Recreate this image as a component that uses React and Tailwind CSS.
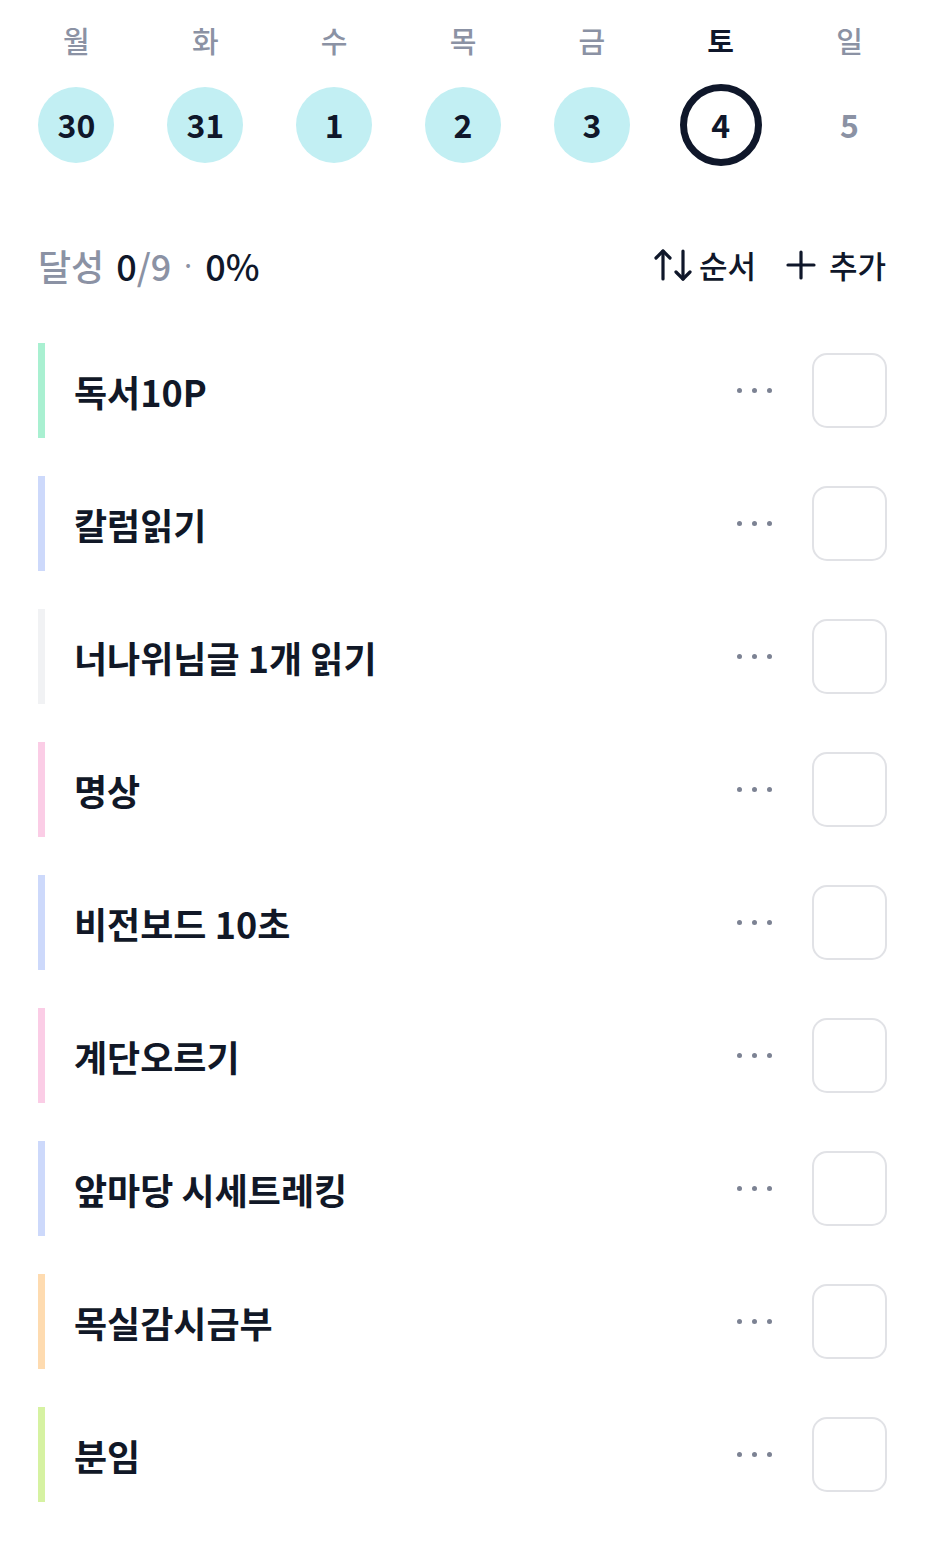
import React from "react";

const days = [
  { w: "월", d: "30", state: "done" },
  { w: "화", d: "31", state: "done" },
  { w: "수", d: "1", state: "done" },
  { w: "목", d: "2", state: "done" },
  { w: "금", d: "3", state: "done" },
  { w: "토", d: "4", state: "today" },
  { w: "일", d: "5", state: "future" },
];

const tasks = [
  { t: "독서10P", c: "bg-[#a9f0d1]" },
  { t: "칼럼읽기", c: "bg-[#cdd9fb]" },
  { t: "너나위님글 1개 읽기", c: "bg-[#f1f2f4]" },
  { t: "명상", c: "bg-[#fbcde6]" },
  { t: "비전보드 10초", c: "bg-[#cdd9fb]" },
  { t: "계단오르기", c: "bg-[#fbcde6]" },
  { t: "앞마당 시세트레킹", c: "bg-[#cdd9fb]" },
  { t: "목실감시금부", c: "bg-[#fedbb0]" },
  { t: "분임", c: "bg-[#d6f2a2]" },
];

function SortIcon() {
  return (
    <svg width="38" height="34" viewBox="0 0 38 34" fill="none" stroke="#0f172a" strokeWidth="3.2" strokeLinecap="round" strokeLinejoin="round">
      <path d="M9 31V3" />
      <path d="M2 10L9 3L16 10" />
      <path d="M29 3V31" />
      <path d="M22 24L29 31L36 24" />
    </svg>
  );
}

function PlusIcon() {
  return (
    <svg width="30" height="30" viewBox="0 0 30 30" fill="none" stroke="#0f172a" strokeWidth="3.2" strokeLinecap="round">
      <path d="M15 2V28" />
      <path d="M2 15H28" />
    </svg>
  );
}

export default function App() {
  return (
    <div
      className="w-[926px] min-h-[1551px] bg-white text-[#0f172a]"
      style={{ fontFamily: '"Noto Sans CJK KR", "Noto Sans", sans-serif' }}
    >
      <div className="grid grid-cols-7 px-[12px] pt-[20px]">
        {days.map((x) => (
          <div key={x.w} className="flex flex-col items-center">
            <div
              className={`h-[40px] leading-[40px] text-[29px] ${
                x.state === "today" ? "font-bold text-[#0f172a]" : "font-medium text-[#8b92a4]"
              }`}
            >
              {x.w}
            </div>
            <div className="mt-[24px] h-[82px] flex items-center justify-center">
              {x.state === "done" && (
                <div className="w-[76px] h-[76px] rounded-full bg-[#c2eff3] flex items-center justify-center text-[32px] leading-none pb-[3px] font-semibold text-[#0f172a]">
                  {x.d}
                </div>
              )}
              {x.state === "today" && (
                <div className="w-[82px] h-[82px] rounded-full border-[7px] border-[#0f172a] flex items-center justify-center text-[32px] leading-none pb-[3px] font-semibold text-[#0f172a]">
                  {x.d}
                </div>
              )}
              {x.state === "future" && (
                <div className="w-[76px] h-[76px] flex items-center justify-center text-[32px] leading-none pb-[3px] font-semibold text-[#8b92a4]">
                  {x.d}
                </div>
              )}
            </div>
          </div>
        ))}
      </div>

      <div className="mt-[74px] h-[50px] flex items-center justify-between pl-[38px] pr-[40px]">
        <div className="text-[36px] font-medium leading-none flex items-center">
          <span className="text-[#8b92a4]">달성</span>
          <span className="ml-[12px] text-[#0f172a]">0</span>
          <span className="text-[#8b92a4]">/9</span>
          <span className="mx-[10px] text-[#8b92a4] text-[24px]">·</span>
          <span className="text-[#0f172a]">0%</span>
        </div>
        <div className="flex items-center text-[31px] font-medium">
          <div className="flex items-center">
            <SortIcon />
            <span className="ml-[7px]">순서</span>
          </div>
          <div className="flex items-center ml-[30px]">
            <PlusIcon />
            <span className="ml-[13px]">추가</span>
          </div>
        </div>
      </div>

      <div className="mt-[53px] flex flex-col gap-[38px] pl-[38px] pr-[39px] pb-[49px]">
        {tasks.map((task) => (
          <div key={task.t} className="h-[95px] flex items-center">
            <div className={`w-[7px] h-full ${task.c}`} />
            <div className="ml-[29px] flex-1 text-[36px] font-semibold text-[#111827]">
              {task.t}
            </div>
            <div className="flex items-center gap-[10px]">
              <span className="w-[5px] h-[5px] rounded-full bg-[#7c8293]" />
              <span className="w-[5px] h-[5px] rounded-full bg-[#7c8293]" />
              <span className="w-[5px] h-[5px] rounded-full bg-[#7c8293]" />
            </div>
            <div className="ml-[40px] w-[75px] h-[75px] rounded-[15px] border-2 border-[#e1e2e6]" />
          </div>
        ))}
      </div>
    </div>
  );
}
